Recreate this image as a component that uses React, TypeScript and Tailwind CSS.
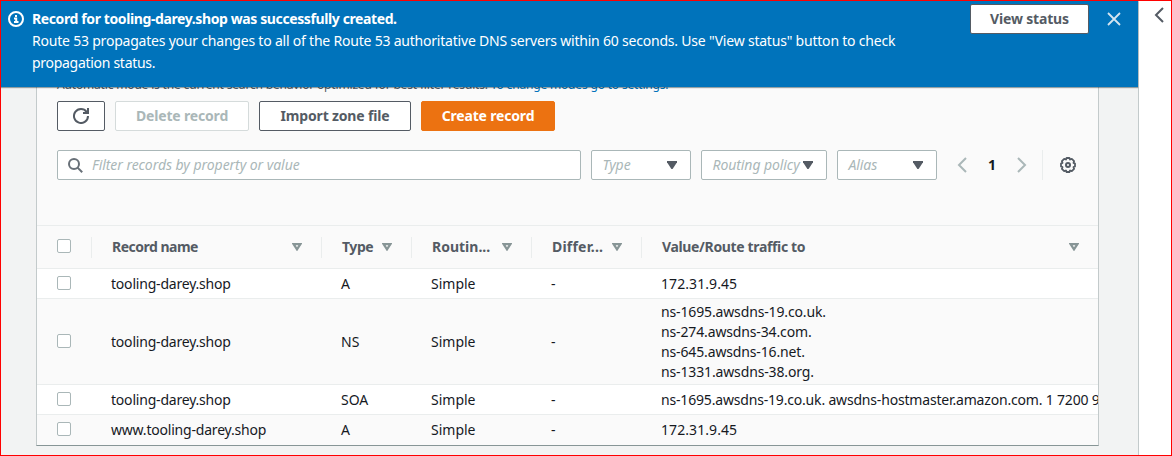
import type { ReactNode } from "react";

const GRID = "grid grid-cols-[54px_230px_90px_120px_110px_457px]";

type RecordRow = {
  name: string;
  type: string;
  values: string[];
  tracking: string;
  shade: string;
  height: string;
};

const records: RecordRow[] = [
  { name: "tooling-darey.shop", type: "A", values: ["172.31.9.45"], tracking: "tracking-[0.08px]", shade: "bg-white", height: "h-[30px]" },
  {
    name: "tooling-darey.shop",
    type: "NS",
    values: ["ns-1695.awsdns-19.co.uk.", "ns-274.awsdns-34.com.", "ns-645.awsdns-16.net.", "ns-1331.awsdns-38.org."],
    tracking: "tracking-[-0.14px]",
    shade: "bg-[#fafafa]",
    height: "h-[86px]",
  },
  {
    name: "tooling-darey.shop",
    type: "SOA",
    values: ["ns-1695.awsdns-19.co.uk. awsdns-hostmaster.amazon.com. 1 7200 9"],
    tracking: "tracking-[-0.18px]",
    shade: "bg-white",
    height: "h-[30px]",
  },
  { name: "www.tooling-darey.shop", type: "A", values: ["172.31.9.45"], tracking: "tracking-[0.08px]", shade: "bg-[#fafafa]", height: "h-[30px]" },
];

const headers = [
  { label: "Record name", tracking: "tracking-[-0.5px]" },
  { label: "Type", tracking: "tracking-[-0.45px]" },
  { label: "Routin...", tracking: "tracking-normal" },
  { label: "Differ...", tracking: "tracking-[0.2px]" },
  { label: "Value/Route traffic to", tracking: "tracking-[-0.35px]" },
];

function Checkbox() {
  return <span className="mb-[2px] block size-[14px] rounded-[2px] border border-[#aab7b8] bg-white" />;
}

function SortIcon() {
  return (
    <svg width="10" height="8" viewBox="0 0 10 8" fill="none" stroke="#879596" strokeWidth="2.2">
      <path d="M1.6 1.1h6.8L5 6.4z" />
    </svg>
  );
}

function SelectBox({ label, width }: { label: string; width: string }) {
  return (
    <div className={`flex h-[30px] items-center justify-between rounded-[2px] border border-[#aab7b8] bg-white pr-[13px] pl-[10.5px] ${width}`}>
      <span className="w-0 tracking-[-0.08px] whitespace-nowrap text-[#aab7b8] italic">{label}</span>
      <svg width="10" height="8" viewBox="0 0 10 8" className="shrink-0" fill="#545b64">
        <path d="M0 0h10v1.2L5.6 8H4.4L0 1.2z" />
      </svg>
    </div>
  );
}

function Button({ children, className }: { children: ReactNode; className: string }) {
  return (
    <button className={`flex h-[30px] items-center justify-center rounded-[2px] border font-bold tracking-[-0.17px] whitespace-nowrap ${className}`}>
      {children}
    </button>
  );
}

function Banner() {
  return (
    <div className="absolute inset-x-0 top-0 z-10 flex h-[86px] bg-[#0073bb] text-white shadow-[0_1px_1px_0_rgba(0,28,36,0.4)]">
      <svg width="16" height="16" viewBox="0 0 16 16" className="mt-[10px] ml-[7px] shrink-0" fill="none" stroke="#fff" strokeWidth="2">
        <circle cx="8" cy="8" r="7" />
        <path d="M6 11h4.5M8.2 11V7.4H6M7 5h2" />
      </svg>
      <div className="mt-[7px] ml-[8px] w-[900px] leading-[22px] tracking-[-0.21px] whitespace-nowrap">
        <div className="font-bold tracking-[-0.39px]">Record for tooling-darey.shop was successfully created.</div>
        <div>
          Route 53 propagates your changes to all of the Route 53 authoritative DNS servers within 60 seconds. Use "View
          status" button to check
        </div>
        <div className="tracking-[-0.29px]">propagation status.</div>
      </div>
      <Button className="mt-[3px] ml-[38px] w-[119px] shrink-0 border-[#545b64] bg-white text-[#545b64]">View status</Button>
      <svg width="14" height="14" viewBox="0 0 14 14" className="mt-[11px] ml-[18px] shrink-0" stroke="#d5e5f0" strokeWidth="1.8">
        <path d="M1 1l12 12M13 1L1 13" />
      </svg>
    </div>
  );
}

export default function App() {
  return (
    <div className="flex h-[456px] w-[1172px] overflow-hidden border border-[#f00] bg-white font-['Noto_Sans','Open_Sans',sans-serif] text-[14px] leading-[20px] text-[#16191f]">
      <main className="relative h-[454px] w-[1138px] shrink-0 border-r border-[#c3cacb] bg-[#f2f3f3]">
        <Banner />
        <section className="ml-[35px] h-[445px] w-[1063px] overflow-hidden border-x border-b border-[#c3cacb] border-b-[#879596] bg-[#fafafa] pt-[75px]">
          <p className="ml-[20px] h-[25px] text-[12px] leading-[18px] tracking-[-0.17px] whitespace-nowrap text-[#545b64]">
            Automatic mode is the current search behavior optimized for best filter results.{" "}
            <a className="text-[#0073bb]">To change modes go to settings.</a>
          </p>
          <div className="ml-[20px] flex gap-[10px]">
            <Button className="w-[48px] border-[#545b64] bg-white">
              <svg width="16" height="16" viewBox="0 0 16 16" fill="none" stroke="#545b64" strokeWidth="2">
                <path d="M10 5h5V0" />
                <path d="M15 8a7 7 0 1 1-1.4-4.2L15 5" />
              </svg>
            </Button>
            <Button className="w-[134px] border-[#d5dbdb] bg-white text-[#aab7b8]">Delete record</Button>
            <Button className="w-[152px] border-[#545b64] bg-white text-[#545b64]">Import zone file</Button>
            <Button className="w-[134px] border-[#ec7211] bg-[#ec7211] text-white">Create record</Button>
          </div>
          <div className="mt-[19px] ml-[20px] flex h-[30px] items-center">
            <div className="flex h-[30px] w-[524px] items-center rounded-[2px] border border-[#aab7b8] bg-white pl-[10px]">
              <svg width="15" height="15" viewBox="0 0 15 15" fill="none" stroke="#687078" strokeWidth="2">
                <circle cx="6" cy="6" r="5" />
                <path d="M9.6 9.6l4.6 4.6" />
              </svg>
              <span className="ml-[9px] tracking-[-0.05px] whitespace-nowrap text-[#aab7b8] italic">
                Filter records by property or value
              </span>
            </div>
            <div className="ml-[10px] flex gap-[10px]">
              <SelectBox label="Type" width="w-[100px]" />
              <SelectBox label="Routing policy" width="w-[126px]" />
              <SelectBox label="Alias" width="w-[100px]" />
            </div>
            <svg width="10" height="16" viewBox="0 0 10 16" className="ml-[20px]" fill="none" stroke="#aab7b8" strokeWidth="2">
              <path d="M9 1L2 8l7 7" />
            </svg>
            <span className="w-[50px] text-center font-bold">1</span>
            <svg width="10" height="16" viewBox="0 0 10 16" fill="none" stroke="#aab7b8" strokeWidth="2">
              <path d="M1 1l7 7-7 7" />
            </svg>
            <span className="ml-[15px] h-[30px] w-px bg-[#eaeded]" />
            <svg width="16" height="16" viewBox="0 0 16 16" className="ml-[17px]" fill="none" stroke="#545b64" strokeWidth="2">
              <circle cx="8" cy="8" r="2" />
              <path
                strokeLinejoin="round"
                strokeWidth="1.8"
                d="M6.600 1h2.800l.7 1.500 1.700-.6 2.300 2.300-.6 1.700 1.500.7v2.800l-1.500.7.6 1.700-2.300 2.300-1.700-.6-.7 1.500H6.600l-.7-1.500-1.700.6-2.300-2.300.6-1.700L1 9.400V6.600l1.500-.7-.6-1.700 2.300-2.300 1.700.6z"
              />
            </svg>
          </div>
          <div className={`mt-[45px] h-[44px] items-center border-y border-[#eaeded] font-bold text-[#545b64] ${GRID}`}>
            <div className="pl-[20px]">
              <Checkbox />
            </div>
            {headers.map((h) => (
              <div key={h.label} className="flex h-[21px] items-center justify-between border-l border-[#eaeded] pr-[19px] pl-[20px]">
                <span className={`whitespace-nowrap ${h.tracking}`}>{h.label}</span>
                <SortIcon />
              </div>
            ))}
          </div>
          {records.map((r, i) => (
            <div key={i} className={`items-center border-b border-[#eaeded] last:border-b-0 ${GRID} ${r.shade} ${r.height}`}>
              <div className="pl-[20px]">
                <Checkbox />
              </div>
              <div className="pl-[20px] tracking-[-0.2px]">{r.name}</div>
              <div className="pl-[20px]">{r.type}</div>
              <div className="pl-[20px]">Simple</div>
              <div className="pl-[20px]">-</div>
              <div className={`overflow-hidden pl-[20px] whitespace-nowrap ${r.tracking}`}>
                {r.values.map((v) => (
                  <div key={v}>{v}</div>
                ))}
              </div>
            </div>
          ))}
        </section>
      </main>
      <aside className="w-[32px] bg-white pt-[6px] pl-[15px]">
        <svg width="10" height="16" viewBox="0 0 10 16" fill="none" stroke="#545b64" strokeWidth="2">
          <path d="M9 1L2 8l7 7" />
        </svg>
      </aside>
    </div>
  );
}
